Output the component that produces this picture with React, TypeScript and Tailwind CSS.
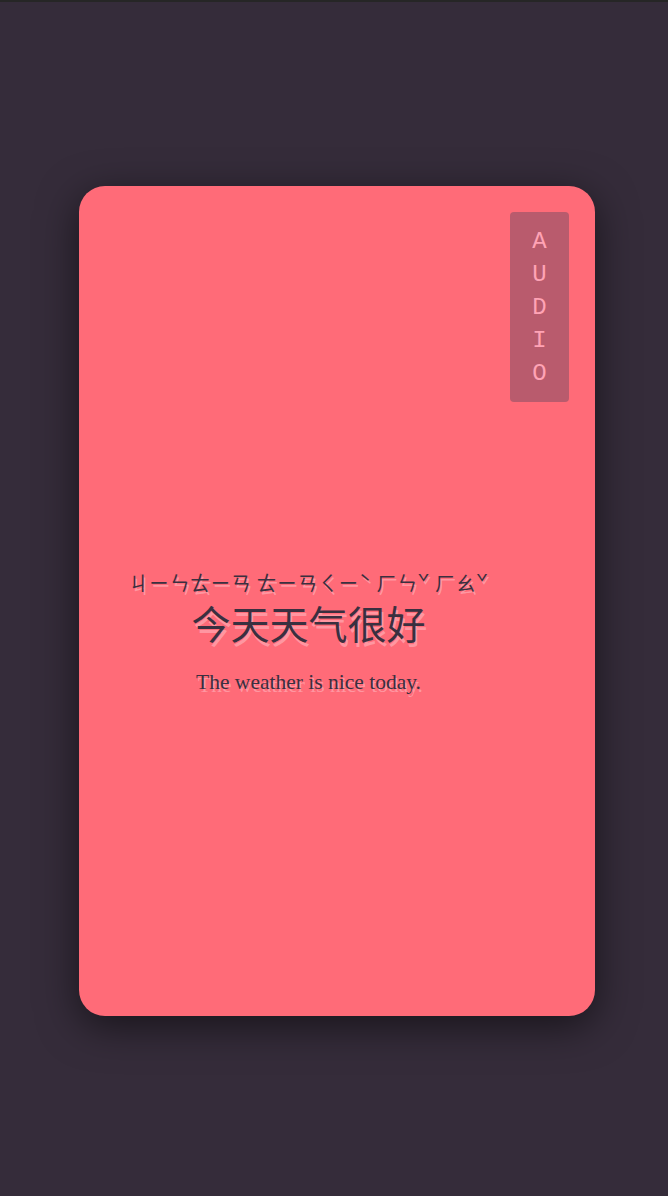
import React from "react";

export default function App() {
  return (
    <div className="min-h-[1196px] w-full bg-[#352c3a] flex flex-col">
      <div className="h-[2px] bg-[#262626]" />
      <div className="flex-1 flex flex-col items-center pt-[184px]">
        <div className="w-[516px] h-[830px] ml-[6px] rounded-[26px] bg-[#ff6b78] shadow-[0_10px_40px_rgba(0,0,0,0.55)] flex flex-row pl-[28px] pr-[26px] pt-[26px] pb-[26px]">
          <div className="flex-1 flex flex-col items-center justify-center pt-[64px]">
            <div
              className="text-[20px] leading-[24px] tracking-[0.5px] text-[#3a3040] [text-shadow:2px_3px_0_rgba(255,170,180,0.7)] whitespace-nowrap mb-[2px]"
              style={{ fontFamily: '"Noto Sans CJK TC", "Noto Sans CJK SC", sans-serif' }}
            >
              ㄐㄧㄣㄊㄧㄢ ㄊㄧㄢㄑㄧˋ ㄏㄣˇ ㄏㄠˇ
            </div>
            <div
              className="text-[39px] leading-[50px] text-[#3a3040] [text-shadow:2px_4px_0_rgba(255,170,180,0.7)] whitespace-nowrap"
              style={{ fontFamily: '"Noto Sans CJK SC", sans-serif' }}
            >
              今天天气很好
            </div>
            <div
              className="mt-[21px] text-[21.5px] leading-[28px] text-[#3a3040] [text-shadow:2px_3px_0_rgba(255,170,180,0.7)] whitespace-nowrap"
              style={{ fontFamily: '"Liberation Serif", serif' }}
            >
              The weather is nice today.
            </div>
          </div>
          <div className="self-start w-[59px] h-[190px] rounded-[4px] bg-[#b95b6d] flex flex-col items-center justify-center text-[#ffa3b5] text-[24px] leading-[33px]" style={{ fontFamily: '"Liberation Mono", monospace' }}>
            <span>A</span>
            <span>U</span>
            <span>D</span>
            <span>I</span>
            <span>O</span>
          </div>
        </div>
      </div>
    </div>
  );
}
